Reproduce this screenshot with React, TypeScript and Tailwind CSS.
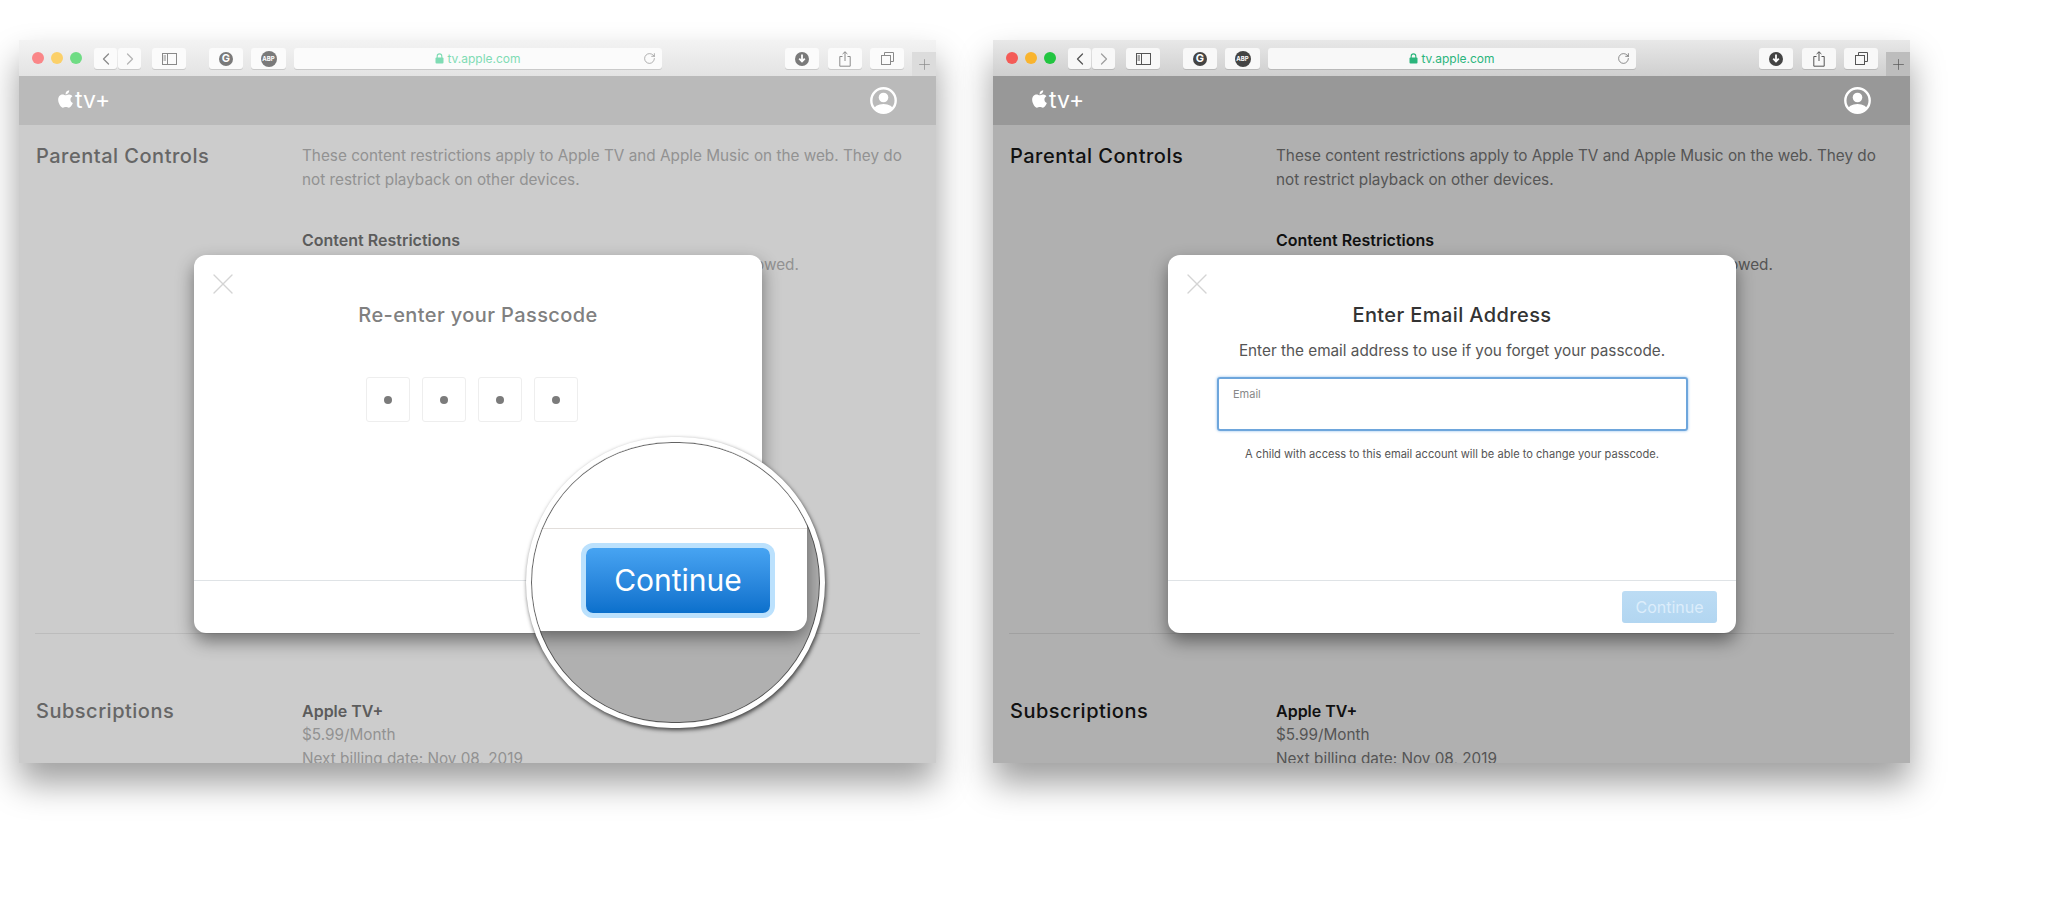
import React from 'react';
import { ChevronLeft, ChevronRight, Plus, RotateCw, X } from 'lucide-react';
import { FaApple } from 'react-icons/fa';

// Colours for the faded (left) and the normal (right) window
const themes = {
    dim: {
        toolbar: 'bg-gradient-to-b from-[#f3f3f3] to-[#e3e3e3]',
        button: 'bg-[#fbfbfb]',
        icon: 'text-[#8a8a8a]',
        iconSoft: 'text-[#b5b5b5]',
        solid: 'bg-[#7a7a7a]',
        red: 'bg-[#fa8688]',
        yellow: 'bg-[#fbd069]',
        green: 'bg-[#6fdc84]',
        url: 'text-[#7fdcb4]',
        tab: 'bg-[#dcdcdc]',
        nav: 'bg-[#bababa]',
        content: 'bg-[#cccccc]',
        heading: 'text-[#666666]',
        strong: 'text-[#5c5c5c]',
        body: 'text-[#929292]',
        rule: 'border-[#bcbcbc]',
    },
    normal: {
        toolbar: 'bg-gradient-to-b from-[#e8e8e8] to-[#cfcfcf]',
        button: 'bg-[#f8f8f8]',
        icon: 'text-[#555555]',
        iconSoft: 'text-[#a0a0a0]',
        solid: 'bg-[#444444]',
        red: 'bg-[#f45b57]',
        yellow: 'bg-[#f9b42e]',
        green: 'bg-[#22c540]',
        url: 'text-[#2bb57c]',
        tab: 'bg-[#bdbdbd]',
        nav: 'bg-[#989898]',
        content: 'bg-[#b0b0b0]',
        heading: 'text-[#111111]',
        strong: 'text-[#111111]',
        body: 'text-[#555555]',
        rule: 'border-[#a0a0a0]',
    },
};

type Theme = typeof themes.dim;

const ToolButton: React.FC<{ theme: Theme; className: string; children?: React.ReactNode }> = ({ theme, className, children }) => (
    <div className={`h-[21px] rounded-[3px] flex items-center justify-center shadow-[0_1px_0_rgba(0,0,0,0.12)] ${theme.button} ${className}`}>
        {children}
    </div>
);

const Toolbar: React.FC<{ theme: Theme }> = ({ theme }) => (
    <div className={`relative h-[36px] flex items-start pt-[8px] pl-[13px] ${theme.toolbar}`}>
        {/* Traffic lights */}
        <div className="flex gap-[7px] mt-[4px]">
            <div className={`w-[12px] h-[12px] rounded-full ${theme.red}`} />
            <div className={`w-[12px] h-[12px] rounded-full ${theme.yellow}`} />
            <div className={`w-[12px] h-[12px] rounded-full ${theme.green}`} />
        </div>

        {/* Back / forward */}
        <div className="flex gap-[1px] ml-[12px]">
            <ToolButton theme={theme} className="w-[23px]">
                <ChevronLeft className={`w-[20px] h-[20px] ${theme.icon}`} strokeWidth={1.5} />
            </ToolButton>
            <ToolButton theme={theme} className="w-[23px]">
                <ChevronRight className={`w-[20px] h-[20px] ${theme.iconSoft}`} strokeWidth={1.5} />
            </ToolButton>
        </div>

        {/* Sidebar */}
        <ToolButton theme={theme} className="w-[34px] ml-[11px]">
            <svg width="15" height="12" viewBox="0 0 15 12" fill="none" stroke="currentColor" className={theme.icon}>
                <rect x="0.5" y="0.5" width="14" height="11" />
                <line x1="5.5" y1="0.5" x2="5.5" y2="11.5" />
                <line x1="1.5" y1="3" x2="4" y2="3" />
                <line x1="1.5" y1="5" x2="4" y2="5" />
                <line x1="1.5" y1="7" x2="4" y2="7" />
            </svg>
        </ToolButton>

        {/* Grammarly */}
        <ToolButton theme={theme} className="w-[34px] ml-[23px]">
            <div className={`w-[14px] h-[14px] rounded-full flex items-center justify-center text-white text-[11px] leading-none font-bold ${theme.solid}`}>
                G
            </div>
        </ToolButton>

        {/* Adblock */}
        <ToolButton theme={theme} className="w-[35px] ml-[8px]">
            <div className={`w-[16px] h-[16px] rounded-full flex items-center justify-center text-white text-[6px] leading-none font-bold ${theme.solid}`}>
                ABP
            </div>
        </ToolButton>

        {/* Address bar */}
        <ToolButton theme={theme} className="relative w-[368px] ml-[8px]">
            <div className={`flex items-center gap-[3px] text-[12px] ${theme.url}`}>
                <svg width="9" height="11" viewBox="0 0 9 11" className="-mt-[1px]">
                    <path d="M2.2 5V3.2a2.3 2.3 0 0 1 4.6 0V5" fill="none" stroke="currentColor" strokeWidth="1.1" />
                    <rect x="0.5" y="4.6" width="8" height="6" rx="1" fill="currentColor" />
                </svg>
                <span>tv.apple.com</span>
            </div>
            <RotateCw className={`absolute right-[6px] top-[4px] w-[13px] h-[13px] ${theme.icon}`} strokeWidth={1.2} />
        </ToolButton>

        {/* Downloads */}
        <ToolButton theme={theme} className="w-[34px] ml-[123px]">
            <div className={`w-[14px] h-[14px] rounded-full flex items-center justify-center ${theme.solid}`}>
                <svg width="8" height="9" viewBox="0 0 8 9" fill="none" stroke="white" strokeWidth="1.8">
                    <path d="M4 0.5V7M1.2 4.6L4 7.4L6.8 4.6" />
                </svg>
            </div>
        </ToolButton>

        {/* Share */}
        <ToolButton theme={theme} className="w-[34px] ml-[9px]">
            <svg width="12" height="16" viewBox="0 0 12 16" fill="none" stroke="currentColor" className={theme.icon}>
                <path d="M3.5 5.5H0.8V15.2H11.2V5.5H8.5" />
                <path d="M6 10V0.8M3.6 3L6 0.8L8.4 3" />
            </svg>
        </ToolButton>

        {/* Tabs */}
        <ToolButton theme={theme} className="w-[34px] ml-[8px]">
            <svg width="13" height="13" viewBox="0 0 13 13" fill="none" stroke="currentColor" className={theme.icon}>
                <rect x="0.5" y="3.5" width="9" height="9" />
                <path d="M3.5 3.5V0.5H12.5V9.5H9.5" />
            </svg>
        </ToolButton>

        {/* New tab */}
        <div className={`absolute right-0 bottom-0 w-[24px] h-[24px] flex items-center justify-center ${theme.tab}`}>
            <Plus className={`w-[17px] h-[17px] ${theme.icon}`} strokeWidth={1} />
        </div>
    </div>
);

const NavBar: React.FC<{ theme: Theme }> = ({ theme }) => (
    <div className={`h-[49px] flex items-center justify-between pl-[37px] pr-[39px] ${theme.nav}`}>
        <div className="flex items-center text-white">
            <FaApple className="w-[19px] h-[20px] -mt-[3px]" />
            <span className="text-[23px] leading-none -mt-[1px]">tv+</span>
        </div>
        <svg width="27" height="27" viewBox="0 0 27 27" className="-mt-[1px]">
            <defs>
                <clipPath id="user-clip">
                    <circle cx="13.5" cy="13.5" r="11.5" />
                </clipPath>
            </defs>
            <circle cx="13.5" cy="13.5" r="12.2" fill="none" stroke="white" strokeWidth="2.4" />
            <g clipPath="url(#user-clip)" fill="white">
                <circle cx="13.5" cy="10.5" r="4.8" />
                <ellipse cx="13.5" cy="23" rx="10" ry="6" />
            </g>
        </svg>
    </div>
);

const PageContent: React.FC<{ theme: Theme }> = ({ theme }) => (
    <div className={`h-[638px] px-[16px] overflow-hidden ${theme.content}`}>
        <div className={`h-[509px] pt-[19px] flex border-b ${theme.rule}`}>
            <h2 className={`w-[267px] pl-[1px] text-[20px] leading-[24px] font-medium tracking-[0.5px] ${theme.heading}`}>Parental Controls</h2>
            <div className="flex-1">
                <p className={`text-[15.3px] leading-[24px] ${theme.body}`}>
                    These content restrictions apply to Apple TV and Apple Music on the web. They do not restrict playback on other devices.
                </p>
                <h3 className={`mt-[36px] text-[16px] leading-[24px] font-semibold ${theme.strong}`}>Content Restrictions</h3>
                <p className={`mt-[1px] pl-[437px] text-[15.3px] leading-[24px] ${theme.body}`}>allowed.</p>
            </div>
        </div>
        <div className="pt-[65px] flex">
            <h2 className={`w-[267px] pl-[1px] text-[20px] leading-[24px] font-medium tracking-[0.5px] ${theme.heading}`}>Subscriptions</h2>
            <div className="flex-1">
                <h3 className={`text-[16px] leading-[24px] font-semibold ${theme.strong}`}>Apple TV+</h3>
                <p className={`text-[15.3px] leading-[24px] ${theme.body}`}>$5.99/Month</p>
                <p className={`text-[15.3px] leading-[24px] ${theme.body}`}>Next billing date: Nov 08, 2019</p>
            </div>
        </div>
    </div>
);

const Modal: React.FC<{ footer?: React.ReactNode; children: React.ReactNode }> = ({ footer, children }) => (
    <div className="absolute left-[175px] top-[215px] w-[568px] h-[378px] bg-white rounded-[12px] flex flex-col shadow-[0_8px_18px_rgba(0,0,0,0.45)]">
        <X className="absolute left-[11px] top-[11px] w-[36px] h-[36px] text-[#d4d4d4]" strokeWidth={0.9} />
        <div className="flex-1 pt-[48px]">{children}</div>
        <div className="h-[53px] border-t border-[#dfe3e6] flex items-center justify-end pr-[19px]">{footer}</div>
    </div>
);

const Magnifier: React.FC = () => (
    <div className="absolute left-[507px] top-[397px] w-[299px] h-[291px] rounded-full border-[5px] border-white overflow-hidden bg-[#b0b0b0] shadow-[1px_2px_4px_rgba(0,0,0,0.7)]">
        <div className="absolute left-0 top-0 w-[276px] h-[189px] bg-white rounded-br-[14px] shadow-[0_6px_18px_rgba(0,0,0,0.45)]">
            <div className="absolute left-0 right-0 top-[86px] border-t border-[#e2dedb]" />
            <div className="absolute left-[55px] top-[106px] w-[184px] h-[65px] rounded-[7px] bg-gradient-to-b from-[#47a4f2] to-[#0a70cc] shadow-[0_0_0_5px_#bbe1fd] flex items-center justify-center text-white text-[30px]">
                Continue
            </div>
        </div>
        <div className="absolute inset-0 rounded-full shadow-[inset_0_0_0_1px_rgba(60,60,60,0.8)]" />
    </div>
);

const BrowserWindow: React.FC<{ theme: Theme; children: React.ReactNode }> = ({ theme, children }) => (
    <div className="relative w-[917px] h-[723px] shrink-0 rounded-t-[3px] shadow-[0_20px_34px_rgba(0,0,0,0.38)] font-['Inter',sans-serif]">
        <Toolbar theme={theme} />
        <NavBar theme={theme} />
        <PageContent theme={theme} />
        {children}
    </div>
);

export default function App() {
    return (
        <div className="w-[2048px] h-[917px] bg-white overflow-hidden flex items-start pl-[19px] pt-[40px] gap-[57px]">
            <BrowserWindow theme={themes.dim}>
                <Modal>
                    <h2 className="text-center text-[20px] leading-[24px] font-medium tracking-[0.4px] text-[#808080]">Re-enter your Passcode</h2>
                    <div className="flex gap-[12px] ml-[172px] mt-[50px]">
                        {[0, 1, 2, 3].map((i) => (
                            <div key={i} className="w-[44px] h-[45px] rounded-[3px] border border-[#eeeeee] flex items-center justify-center">
                                <div className="w-[8px] h-[8px] rounded-full bg-[#7b7b7b]" />
                            </div>
                        ))}
                    </div>
                </Modal>
                <Magnifier />
            </BrowserWindow>

            <BrowserWindow theme={themes.normal}>
                <Modal
                    footer={
                        <div className="w-[95px] h-[32px] rounded-[3px] bg-gradient-to-b from-[#bcdcf4] to-[#b2d6f1] flex items-center justify-center text-[16px] text-[#dcedfb]">
                            Continue
                        </div>
                    }
                >
                    <h2 className="text-center text-[20px] leading-[24px] font-medium tracking-[0.4px] text-[#333333]">Enter Email Address</h2>
                    <p className="mt-[12px] text-center text-[15.3px] leading-[24px] text-[#555555]">Enter the email address to use if you forget your passcode.</p>
                    <div className="mt-[14px] ml-[49px] w-[471px] h-[54px] rounded-[3px] border-2 border-[#6ea6dc] shadow-[0_0_3px_#8fbdeb] px-[14px] pt-[8px] text-[11px] leading-[14px] text-[#888888]">
                        Email
                    </div>
                    <p className="mt-[15px] text-center text-[11.1px] leading-[16px] text-[#555555]">A child with access to this email account will be able to change your passcode.</p>
                </Modal>
            </BrowserWindow>
        </div>
    );
}
